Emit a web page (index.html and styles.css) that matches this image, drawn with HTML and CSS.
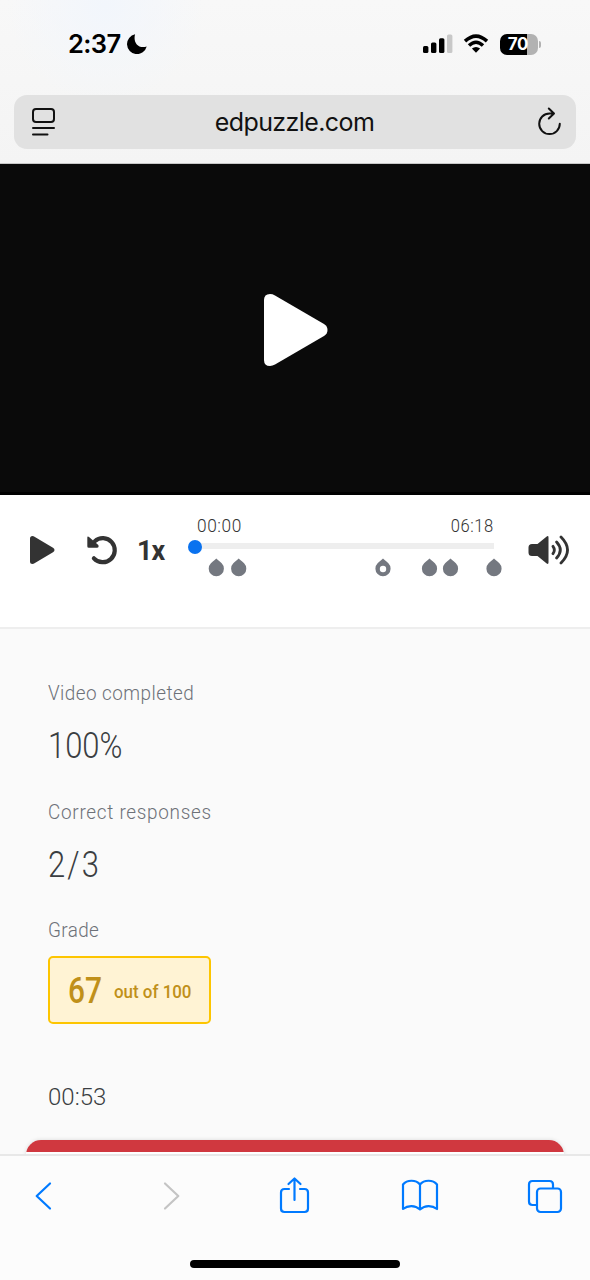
FILE: index.html
```html
<!DOCTYPE html>
<html lang="en">
<head>
<meta charset="utf-8">
<title>edpuzzle.com</title>
<link rel="stylesheet" href="styles.css">
</head>
<body>
<div class="phone">
  <header class="browser-top">
    <div class="status">
      <div class="clock"><span class="time">2:37</span>
        <svg class="moon" width="20" height="20" viewBox="0 0 20 20"><path d="M8.1.3C5.900 7.500 10.500 15.200 19.700 12.600A10 10 0 1 1 8.100.3Z"/></svg>
      </div>
      <div class="indicators">
        <svg width="30" height="20" viewBox="0 0 30 20"><rect x="0" y="12" width="5.400" height="7" rx="1.500"/><rect x="8" y="8.500" width="5.400" height="10.500" rx="1.500"/><rect x="16" y="4.300" width="5.400" height="14.700" rx="1.500"/><rect x="24" y=".5" width="5.400" height="18.500" rx="1.500" fill="#c8c8c8"/></svg>
        <svg class="wifi" width="26" height="20" viewBox="0 0 26 20"><path d="M2 7.100Q13-3 24 7.100M6 11.500Q13 5 20 11.500" fill="none" stroke="#000" stroke-width="3.500"/><path d="M8.900 14.600Q13 11.400 17.100 14.600L13 18.800Z"/></svg>
        <div class="battery"><span>70</span></div><i class="battery-tip"></i>
      </div>
    </div>
    <div class="address">
      <svg width="26" height="30" viewBox="0 0 26 30"><g fill="none" stroke="#111" stroke-width="2" stroke-linecap="round"><rect x="2" y="2" width="21" height="13" rx="3"/><path d="M2 21h21M2 27.500h14.500"/></g></svg>
      <span class="domain">edpuzzle.com</span>
      <svg width="26" height="30" viewBox="0 0 26 30"><g fill="none" stroke="#111" stroke-width="2" stroke-linecap="round" stroke-linejoin="round"><path d="M17.500 6.500H13.500A10.300 10.300 0 1 0 23.800 16.800M12.800 1.500l5.200 5-5.200 5"/></g></svg>
    </div>
  </header>

  <main class="page">
    <section class="video">
      <svg width="64" height="74" viewBox="0 0 64 74"><path d="M0 7Q0 1 6 1Q8.500 1 11 2.400L60 31Q63.500 33.200 63.500 37T60 43L11 71.600Q8.500 73 6 73Q0 73 0 67Z" fill="#fff"/></svg>
    </section>

    <section class="controls">
      <svg class="play" width="26" height="30" viewBox="0 0 26 30"><path d="M1 3.500Q1 1 3.500 1Q4.500 1 5.500 1.700L24 12.800Q25.500 13.700 25.500 15T24 17.200L5.500 28.300Q4.500 29 3.500 29Q1 29 1 26.500Z" fill="#333"/></svg>
      <svg class="replay" width="32" height="30" viewBox="0 0 32 30"><path d="M8.800 6.200A12 12 0 1 1 7.900 23.300" fill="none" stroke="#333" stroke-width="4.200" stroke-linecap="round"/><path d="M1.300 2.800Q1.300.8 3 2L12.300 10Q13.300 12.500 11 12.800H2.800Q1.300 12.800 1.300 11.300Z" fill="#333"/></svg>
      <span class="rate"><span class="rate-text">1x</span></span>
      <div class="timeline">
        <div class="times"><span>00:00</span><span>06:18</span></div>
        <div class="track"><i class="thumb"></i></div>
        <svg class="markers" width="310" height="20" viewBox="0 0 310 20">
          <defs><path id="drop" d="M0-.5Q1.200.5 5.400 4.300A7.600 7.600 0 1 1-5.400 4.300Q-1.200.5 0-.5Z" fill="#747880"/></defs>
          <use href="#drop" x="21.300" y="1"/><use href="#drop" x="43.700" y="1"/><use href="#drop" x="188" y="1"/><use href="#drop" x="234.500" y="1"/><use href="#drop" x="255.500" y="1"/><use href="#drop" x="299" y="1"/>
          <circle cx="188" cy="11" r="3.200" fill="#fff"/>
        </svg>
      </div>
      <svg class="volume" width="42" height="30" viewBox="0 0 42 30"><path d="M.5 12.500Q.5 9 4 9H9.500L18.700 1.500Q20.500.4 20.500 2.500V27.500Q20.500 29.600 18.700 28.500L9.500 21H4Q.5 21 .5 17.500Z" fill="#333"/><g fill="none" stroke="#333" stroke-width="2.800" stroke-linecap="round"><path d="M25 11.300Q27.700 15 25 18.700M28.600 7Q36 15 28.600 23M33 2Q46 15 33 28"/></g></svg>
    </section>

    <section class="results">
      <div class="label"><span class="completed">Video completed</span></div>
      <div class="value"><span class="percent">100%</span></div>
      <div class="label"><span class="responses">Correct responses</span></div>
      <div class="value"><span class="fraction">2/3</span></div>
      <div class="label"><span>Grade</span></div>
      <div class="grade"><span class="score">67</span><span class="outof">out of 100</span></div>
      <div class="timestamp">00:53</div>
      <div class="question"></div>
    </section>
  </main>

  <footer class="toolbar">
    <nav class="actions">
      <svg width="38" height="38" viewBox="0 0 38 38"><path d="M26 6.500 12.700 19 26 31.500"/></svg>
      <svg class="disabled" width="38" height="38" viewBox="0 0 38 38"><path d="M15 6.500 28.300 19 15 31.500"/></svg>
      <svg width="38" height="38" viewBox="0 0 38 38"><path d="M14 12H9.500Q6 12 6 15.500V31.500Q6 35 9.500 35H29.500Q33 35 33 31.500V15.500Q33 12 29.500 12H25M19.500 23V1.800M13.500 7l6-5.500 6 5.500"/></svg>
      <svg width="38" height="38" viewBox="0 0 38 38"><path d="M19 7.500C15 2.500 6 2.500 2 7.500V32C7 28 14 28 19 32.500C24 28 31 28 36 32V7.500C32 2.500 23 2.500 19 7.500V32.500"/></svg>
      <svg width="38" height="38" viewBox="0 0 38 38"><path d="M10.500 28H6.500Q3 28 3 24.500V7.500Q3 4 6.500 4H23.500Q27 4 27 7.500V11"/><rect x="11" y="11.500" width="24" height="23.500" rx="3.500"/></svg>
    </nav>
    <div class="home-bar"></div>
  </footer>
</div>
</body>
</html>
```
FILE: styles.css
```css
* { box-sizing: border-box; }
body { margin: 0; background: #fafafa; font-family: Roboto, "Liberation Sans", sans-serif; }
svg { display: block; flex: none; }
.phone { width: 590px; height: 1280px; overflow: hidden; display: flex; flex-direction: column; }

.browser-top { height: 164px; background: radial-gradient(circle at 105px 5px, #f2f6fc, transparent 100px), linear-gradient(#f8f8f8, #f4f4f4); font-family: Inter, sans-serif; color: #000; border-bottom: 1px solid #c8c8c8; }
.status { height: 95px; padding: 28px 49px 0 68px; display: flex; justify-content: space-between; }
.clock, .indicators { height: 32px; display: flex; align-items: center; }
.time { font-size: 25.5px; font-weight: 600; line-height: 32px; letter-spacing: -.6px; }
.moon { margin-left: 6px; }
.wifi { margin: 0 11px 0 10px; }
.battery { width: 38px; height: 21px; padding-right: 2px; border-radius: 7px; background: linear-gradient(90deg, #000 71%, #b2b2b2 71%); color: #fff; font-size: 17px; font-weight: 700; line-height: 21px; text-align: center; letter-spacing: -.3px; }
.battery-tip { width: 2px; height: 7px; margin-left: 1px; border-radius: 0 2px 2px 0; background: #b2b2b2; }
.address { height: 54px; margin: 0 14px; padding: 0 14px 0 17px; display: flex; align-items: center; justify-content: space-between; border-radius: 13px; background: #e1e1e1; }
.domain { padding-right: 4px; font-size: 25px; color: #111; letter-spacing: -.6px; }

.page { flex: 1; display: flex; flex-direction: column; overflow: hidden; }
.video { height: 331px; flex: none; padding: 3px 0 0 2px; background: #0a0a0a; border-bottom: 3px solid #000; display: flex; align-items: center; justify-content: center; }
.controls { height: 134px; flex: none; display: flex; align-items: flex-start; padding: 20px 20px 0 29px; background: #fff; border-bottom: 2px solid #eee; }
.play, .replay, .volume { margin-top: 20px; }
.replay { margin-left: 31px; }
.rate { width: 30px; flex: none; margin: 20px 0 0 19px; font-size: 28px; line-height: 32px; font-weight: 700; color: #333; letter-spacing: -1px; }
.rate-text { display: inline-block; transform: scaleX(.96); transform-origin: left; }
.timeline { width: 299px; flex: none; margin-left: 28px; }
.times { display: flex; justify-content: space-between; padding: 1px 0 0 2px; font-size: 18px; line-height: 20px; font-weight: 300; color: #333; }
.times span { display: block; transform: scaleX(.96); transform-origin: left; letter-spacing: .6px; }
.times span:last-child { transform: scaleX(.92); transform-origin: right; }
.track { position: relative; height: 6px; margin-top: 7px; background: #eee; }
.thumb { position: absolute; left: -7px; top: -3px; width: 14px; height: 14px; border-radius: 50%; background: #0a72ef; }
.markers { margin-top: 9px; }
.volume { margin-left: 34px; }

.results { padding: 51px 26px 0; flex: none; }
.label { margin-left: 22px; font-size: 21px; line-height: 26px; font-weight: 300; color: #6d7178; }
.label span { display: inline-block; transform: scaleX(.9); transform-origin: left; letter-spacing: .4px; }
.label .completed { letter-spacing: .5px; }
.label .responses { letter-spacing: .8px; }
.value { height: 92.5px; margin-left: 22px; padding-top: 18px; font-size: 36px; line-height: 44px; font-weight: 300; color: #3a3e42; }
.percent, .score, .fraction { display: inline-block; transform: scaleX(.86); transform-origin: left; }
.fraction { letter-spacing: 2.5px; }
.score { transform: scaleX(.83); }
.grade { width: 163px; height: 68px; margin: 13px 0 0 22px; padding: 2px 0 0 18px; display: flex; align-items: center; border: 2px solid #fdc500; border-radius: 5px; background: #fff3d4; color: #c0901a; font-weight: 500; }
.score { font-size: 36px; width: 46px; }
.outof { font-size: 18px; white-space: nowrap; transform: scaleX(.94); transform-origin: left; }
.timestamp { margin: 58px 0 0 22px; font-size: 24px; line-height: 30px; font-weight: 300; color: #3a3e42; }
.question { height: 80px; margin-top: 28px; border-radius: 15px 15px 0 0; background: linear-gradient(#d0383f 12px, #fff 12px); box-shadow: 0 0 4px #0002; }

.toolbar { height: 126px; flex: none; background: #fcfcfc; border-top: 2px solid #e8e8e8; display: flex; flex-direction: column; align-items: center; }
.actions { width: 100%; padding: 21px 26px 0 24px; display: flex; justify-content: space-between; }
.actions svg { fill: none; stroke: #007aff; stroke-width: 2.2; stroke-linecap: round; stroke-linejoin: round; }
.actions .disabled { stroke: #c4c4c4; }
.home-bar { width: 210px; height: 8px; margin-top: 45px; border-radius: 4px; background: #000; }
```
